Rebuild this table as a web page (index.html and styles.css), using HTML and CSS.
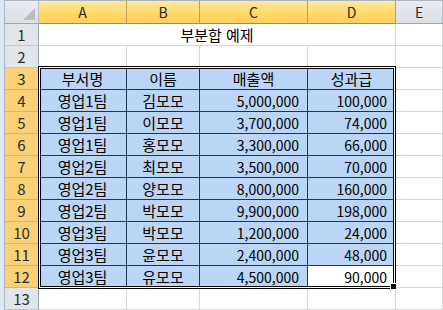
FILE: index.html
```html
<!DOCTYPE html>
<html lang="ko">
<head>
<meta charset="utf-8">
<link rel="stylesheet" href="styles.css">
</head>
<body>
<div class="frame">
  <div class="strip"></div>
  <div class="sheet">
    <div class="corner"><span class="tri"></span></div>
    <div class="ch sel">A</div>
    <div class="ch sel">B</div>
    <div class="ch sel">C</div>
    <div class="ch sel">D</div>
    <div class="ch">E</div>

    <div class="rh">1</div>
    <div class="c title">부분합 예제</div>
    <div class="c"></div>

    <div class="rh">2</div>
    <div class="c"></div><div class="c"></div><div class="c"></div><div class="c"></div><div class="c"></div>

    <div class="rh sel">3</div>
    <div class="d ctr">부서명</div><div class="d ctr">이름</div><div class="d ctr">매출액</div><div class="d ctr">성과급</div><div class="c"></div>

    <div class="rh sel">4</div>
    <div class="d ctr">영업1팀</div><div class="d ctr">김모모</div><div class="d num">5,000,000</div><div class="d num">100,000</div><div class="c"></div>

    <div class="rh sel">5</div>
    <div class="d ctr">영업1팀</div><div class="d ctr">이모모</div><div class="d num">3,700,000</div><div class="d num">74,000</div><div class="c"></div>

    <div class="rh sel">6</div>
    <div class="d ctr">영업1팀</div><div class="d ctr">홍모모</div><div class="d num">3,300,000</div><div class="d num">66,000</div><div class="c"></div>

    <div class="rh sel">7</div>
    <div class="d ctr">영업2팀</div><div class="d ctr">최모모</div><div class="d num">3,500,000</div><div class="d num">70,000</div><div class="c"></div>

    <div class="rh sel">8</div>
    <div class="d ctr">영업2팀</div><div class="d ctr">양모모</div><div class="d num">8,000,000</div><div class="d num">160,000</div><div class="c"></div>

    <div class="rh sel">9</div>
    <div class="d ctr">영업2팀</div><div class="d ctr">박모모</div><div class="d num">9,900,000</div><div class="d num">198,000</div><div class="c"></div>

    <div class="rh sel">10</div>
    <div class="d ctr">영업3팀</div><div class="d ctr">박모모</div><div class="d num">1,200,000</div><div class="d num">24,000</div><div class="c"></div>

    <div class="rh sel">11</div>
    <div class="d ctr">영업3팀</div><div class="d ctr">윤모모</div><div class="d num">2,400,000</div><div class="d num">48,000</div><div class="c"></div>

    <div class="rh sel">12</div>
    <div class="d ctr">영업3팀</div><div class="d ctr">유모모</div><div class="d num">4,500,000</div><div class="d num active">90,000</div><div class="c"></div>

    <div class="rh">13</div>
    <div class="c"></div><div class="c"></div><div class="c"></div><div class="c"></div><div class="c"></div>

    <div class="selection"></div>
    <div class="handle"></div>
  </div>
</div>
</body>
</html>
```

FILE: styles.css
```css
* { box-sizing: border-box; }
html, body { margin: 0; padding: 0; background: #fff; }
body {
  width: 443px;
  height: 310px;
  overflow: hidden;
  font-family: "Noto Sans CJK KR", "Noto Sans", sans-serif;
  font-size: 15px;
  color: #000;
}
.frame { display: flex; width: 443px; height: 310px; }
.strip {
  width: 5px;
  flex: none;
  background: #dde8f5;
  border-right: 1px solid #a7b6c8;
}
.sheet {
  position: relative;
  flex: 1;
  display: grid;
  grid-template-columns: 34px 88px 73px 108px 88px 1fr;
  grid-template-rows: 24px repeat(14, 22px);
  align-content: start;
}
.corner, .ch {
  border-top: 1px solid #a9b4c2;
  border-bottom: 1px solid #9faab8;
  border-right: 1px solid #b7bdc6;
  background: linear-gradient(#e8ebef, #dcdfe4);
}
.corner { position: relative; }
.tri {
  position: absolute;
  right: 3px;
  bottom: 3px;
  width: 0;
  height: 0;
  border-left: 12px solid transparent;
  border-bottom: 12px solid #b9bec6;
}
.ch {
  display: flex;
  align-items: center;
  justify-content: center;
  color: #2b2b2b;
  font-size: 14px;
}
.ch.sel {
  background: linear-gradient(#ffe9a0, #ffd764 60%, #f9d062);
  border-right-color: #c69a52;
  border-bottom-color: #b8853a;
}
.rh {
  display: flex;
  align-items: center;
  justify-content: center;
  background: #e2e5ea;
  border-right: 1px solid #9faab8;
  border-bottom: 1px solid #c3c8cf;
  color: #2b2b2b;
  font-size: 15px;
}
.rh.sel {
  background: #fad275;
  border-right-color: #c69a52;
  border-bottom-color: #e0b45f;
}
.c {
  border-right: 1px solid #d6d6d6;
  border-bottom: 1px solid #d6d6d6;
}
.title {
  grid-column: span 4;
  display: flex;
  align-items: center;
  justify-content: center;
  line-height: 20px;
}
.d {
  background: #bad5f5;
  border-right: 1px solid #1e3556;
  border-bottom: 1px solid #1e3556;
  display: flex;
  align-items: center;
  line-height: 20px;
}
.ctr { justify-content: center; }
.num { justify-content: flex-end; padding-right: 8px; font-size: 14px; }
.d.active { background: #fff; }
.selection {
  position: absolute;
  left: 33px;
  top: 66px;
  width: 358px;
  height: 223px;
  border: 1px solid #000;
  box-shadow: inset 0 0 0 1px #fff, inset 0 0 0 2px #000;
  pointer-events: none;
}
.handle {
  position: absolute;
  left: 385px;
  top: 283px;
  width: 7px;
  height: 7px;
  background: #000;
  border: 1px solid #fff;
}
```
